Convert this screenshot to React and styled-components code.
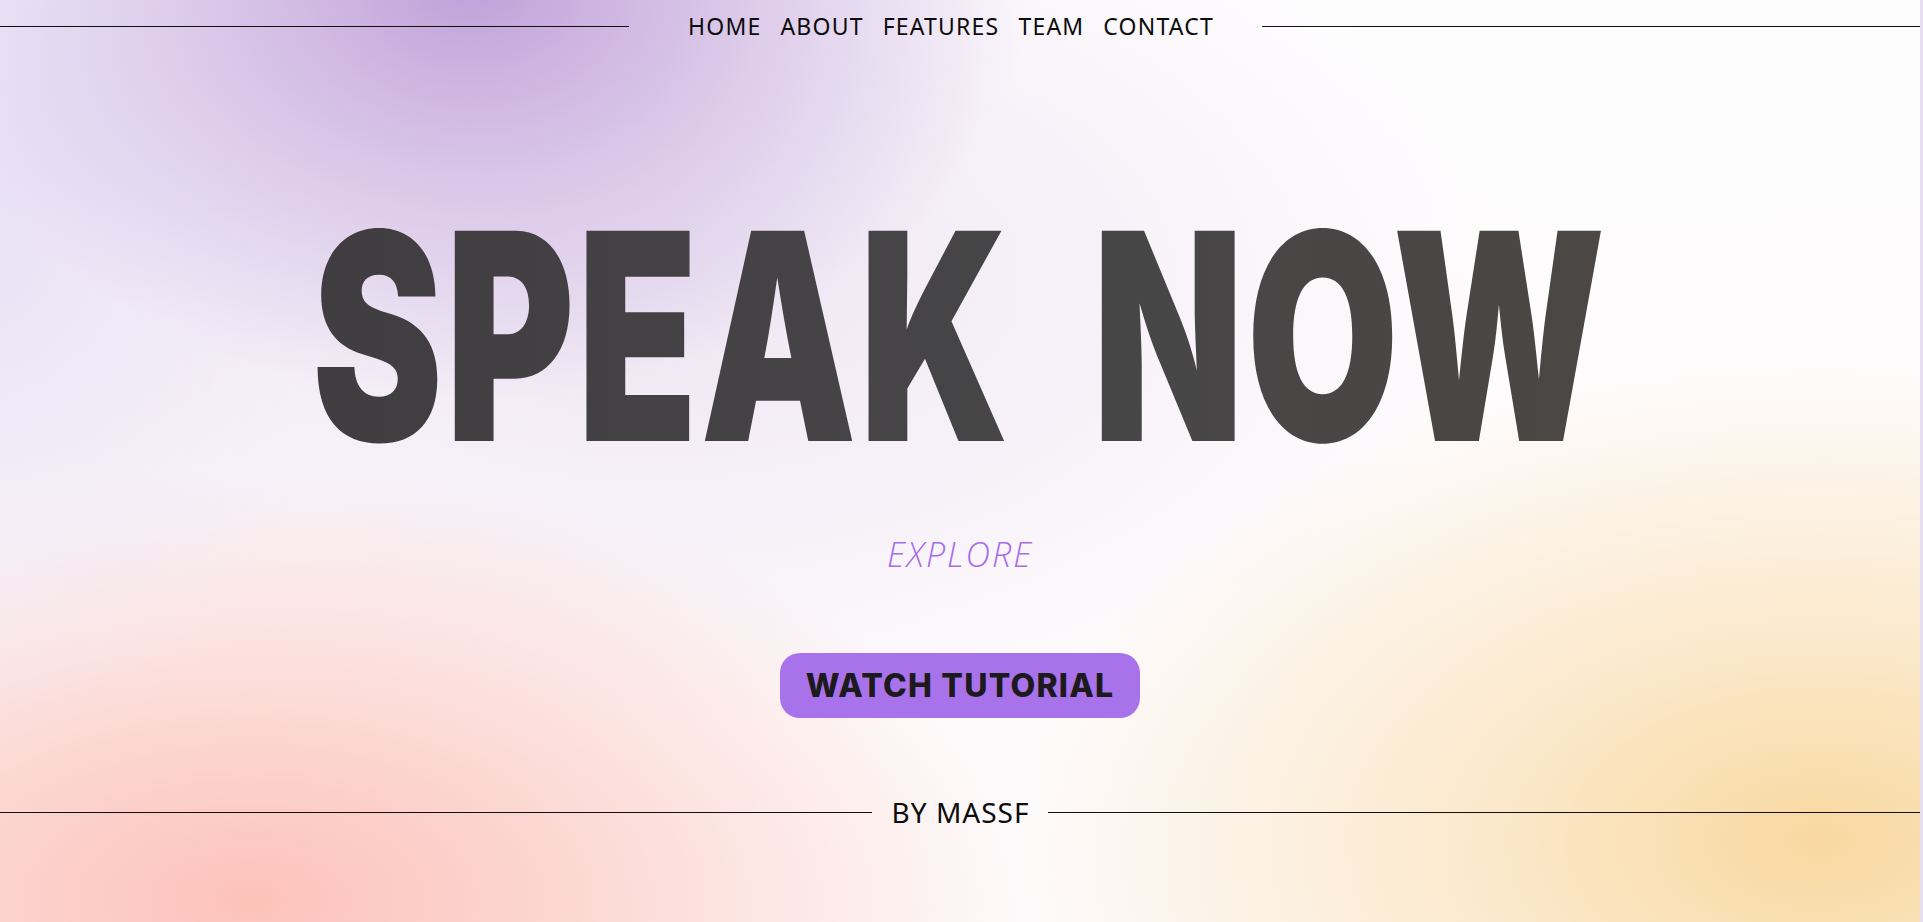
import React from "react";
import styled, { createGlobalStyle } from "styled-components";

const Global = createGlobalStyle`
  html, body { margin: 0; padding: 0; background: #e7def4; }
  body { overflow: hidden; }
  * { box-sizing: border-box; }
`;

const Page = styled.div`
  width: calc(100% - 3px);
  height: 922px;
  display: flex;
  flex-direction: column;
  align-items: stretch;
  overflow: hidden;
  background:
    radial-gradient(ellipse 560px 420px at 470px -20px, rgba(190, 160, 216, 1) 0%, rgba(200, 172, 222, 0.75) 35%, rgba(220, 200, 235, 0) 100%),
    radial-gradient(ellipse 420px 520px at -40px 220px, rgba(232, 224, 245, 1) 0%, rgba(236, 228, 246, 0.6) 50%, rgba(240, 234, 248, 0) 100%),
    radial-gradient(ellipse 780px 430px at 250px 900px, rgba(252, 194, 186, 1) 0%, rgba(252, 205, 198, 0.78) 40%, rgba(253, 230, 228, 0) 100%),
    radial-gradient(ellipse 800px 480px at 1820px 840px, rgba(249, 216, 160, 1) 0%, rgba(250, 224, 180, 0.7) 40%, rgba(252, 240, 220, 0) 100%),
    radial-gradient(ellipse 850px 460px at 650px 280px, rgba(236, 226, 242, 0.85) 0%, rgba(244, 238, 246, 0) 100%),
    linear-gradient(180deg, #fefdfe 0%, #fdfafb 100%);
`;

const Header = styled.header`
  display: flex;
  align-items: center;
  height: 52px;
`;

const Rule = styled.div`
  flex: ${(p) => p.$grow || 1} 1 0;
  height: 1px;
  background: #111;
`;

const Nav = styled.nav`
  display: flex;
  align-items: center;
  gap: 19px;
  padding: ${(p) => p.$pad};
`;

const NavLink = styled.a`
  font-family: "Noto Sans", "Open Sans", sans-serif;
  font-size: 23px;
  font-weight: 400;
  letter-spacing: 1.2px;
  color: #0c0c0c;
  text-decoration: none;
  cursor: pointer;
  white-space: nowrap;
`;

const Hero = styled.main`
  flex: 1;
  display: flex;
  flex-direction: column;
  align-items: center;
`;

const Title = styled.h1`
  margin: 140px 0 0;
  font-family: "Inter", "Roboto", sans-serif;
  font-weight: 900;
  font-size: 289px;
  line-height: 1;
  color: #444244;
  white-space: nowrap;
  letter-spacing: 4px;
  word-spacing: 58px;
  transform: scaleX(0.68);
  transform-origin: center;
  background: linear-gradient(90deg, #403d41 0%, #474647 60%, #4a4744 100%);
  -webkit-background-clip: text;
  background-clip: text;
  -webkit-text-fill-color: transparent;
`;

const Explore = styled.a`
  margin-top: 50px;
  font-family: "Open Sans", "Noto Sans", sans-serif;
  font-style: italic;
  font-weight: 300;
  font-size: 34px;
  letter-spacing: 2px;
  color: #a56eea;
  text-decoration: none;
  cursor: pointer;
`;

const Button = styled.button`
  margin-top: 76px;
  width: 360px;
  height: 65px;
  border: none;
  border-radius: 20px;
  background: #a873ea;
  color: #1d1a1e;
  font-family: "Inter", "Noto Sans", sans-serif;
  font-weight: 800;
  font-size: 32px;
  letter-spacing: 1.2px;
  cursor: pointer;
  display: flex;
  align-items: center;
  justify-content: center;
`;

const Footer = styled.footer`
  display: flex;
  align-items: center;
  height: 40px;
  margin-bottom: 90px;
`;

const Credit = styled.span`
  font-family: "Noto Sans", "Open Sans", sans-serif;
  font-size: 28px;
  letter-spacing: 1px;
  color: #0c0c0c;
  padding: 0 19px 0 20px;
  white-space: nowrap;
`;

const links = ["HOME", "ABOUT", "FEATURES", "TEAM", "CONTACT"];

export default function App() {
  return (
    <>
      <Global />
      <Page>
        <Header>
          <Rule $grow={629} />
          <Nav $pad="0 48px 0 59px">
            {links.map((l) => (
              <NavLink key={l}>{l}</NavLink>
            ))}
          </Nav>
          <Rule $grow={658} />
        </Header>
        <Hero>
          <Title>SPEAK NOW</Title>
          <Explore>EXPLORE</Explore>
          <Button>WATCH TUTORIAL</Button>
        </Hero>
        <Footer>
          <Rule />
          <Credit>BY MASSF</Credit>
          <Rule />
        </Footer>
      </Page>
    </>
  );
}
